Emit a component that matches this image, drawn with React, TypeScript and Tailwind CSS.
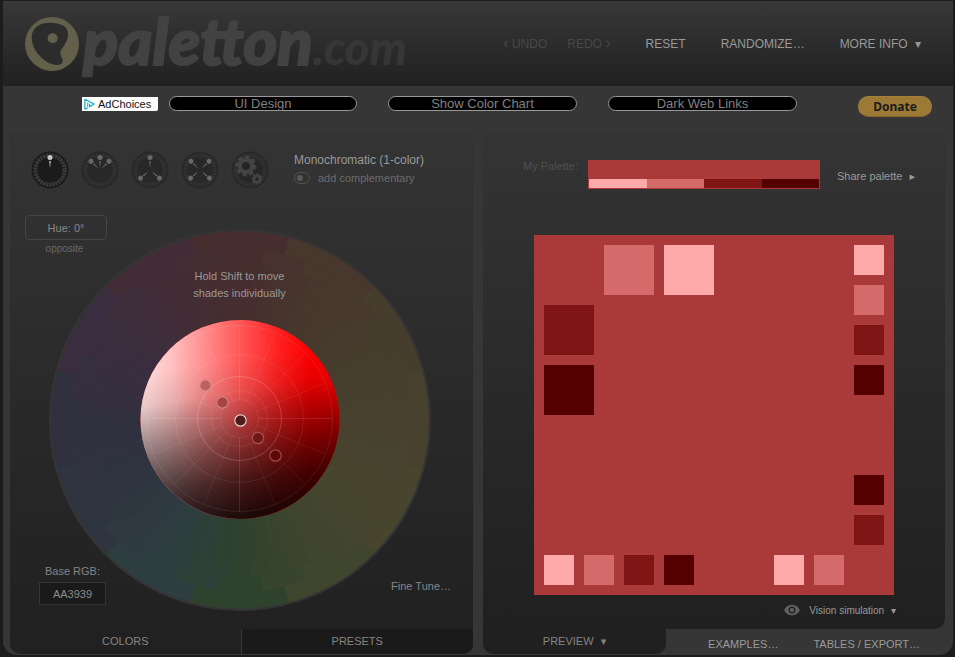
import React from "react";
import { IoMdEye } from "react-icons/io";

const polar = (r: number, deg: number): [number, number] => {
  const a = ((deg - 90) * Math.PI) / 180;
  return [r * Math.cos(a), r * Math.sin(a)];
};

const HUES: [number, number, number][] = [
  [70, 45, 46], [71, 55, 45], [71, 61, 45], [71, 65, 46], [71, 69, 46], [64, 69, 46],
  [46, 66, 45], [46, 61, 64], [46, 52, 64], [49, 48, 63], [58, 45, 63], [66, 45, 55],
];

function hueColor(deg: number) {
  const pos = (((deg % 360) + 360) % 360) / 30;
  const i = Math.floor(pos);
  const f = pos - i;
  const a = HUES[i % 12];
  const b = HUES[(i + 1) % 12];
  return `rgb(${a.map((v, k) => Math.round(v + (b[k] - v) * f)).join(",")})`;
}

function sector(r: number, from: number, to: number) {
  const [x1, y1] = polar(r, from);
  const [x2, y2] = polar(r, to);
  return `M0 0L${x1} ${y1}A${r} ${r} 0 0 1 ${x2} ${y2}Z`;
}

function HueRing({ r, count }: { r: number; count: number }) {
  const step = 360 / count;
  return (
    <>
      {Array.from({ length: count }, (_, i) => (
        <path key={i} d={sector(r, (i - 0.5) * step, (i + 0.5) * step + 0.3)} fill={hueColor(i * step)} />
      ))}
    </>
  );
}

const HANDLES = [
  { x: -34.5, y: -34.5, fill: "#c06060", stroke: "#d98f8f" },
  { x: -17.5, y: -17.5, fill: "#a84444", stroke: "#cf8080" },
  { x: 18, y: 18, fill: "#701818", stroke: "#a85252" },
  { x: 35.5, y: 35.5, fill: "#5a0808", stroke: "#a04848" },
  { x: 0.5, y: 0.5, fill: "#511b1b", stroke: "#e6cccc" },
];

function ColorWheel() {
  return (
    <svg viewBox="-191 -191 382 382" className="h-[382px] w-[382px]" role="img" aria-label="Color wheel">
      <defs>
        <linearGradient id="tint" x1="0" y1="0" x2="1" y2="0">
          <stop offset="0" stopColor="#fff" stopOpacity="0.88" />
          <stop offset="0.15" stopColor="#fff" stopOpacity="0.76" />
          <stop offset="0.35" stopColor="#fff" stopOpacity="0.52" />
          <stop offset="0.5" stopColor="#fff" stopOpacity="0.34" />
          <stop offset="0.7" stopColor="#fff" stopOpacity="0.12" />
          <stop offset="0.85" stopColor="#fff" stopOpacity="0" />
        </linearGradient>
        <linearGradient id="shade" x1="0.42" y1="0" x2="0.58" y2="1">
          <stop offset="0.2" stopColor="#000" stopOpacity="0" />
          <stop offset="0.36" stopColor="#000" stopOpacity="0.09" />
          <stop offset="0.5" stopColor="#000" stopOpacity="0.3" />
          <stop offset="0.62" stopColor="#000" stopOpacity="0.48" />
          <stop offset="0.8" stopColor="#000" stopOpacity="0.72" />
          <stop offset="1" stopColor="#000" stopOpacity="0.9" />
        </linearGradient>
      </defs>
      <circle r="190" fill="#333" />
      <HueRing r={189} count={12} />
      <HueRing r={172} count={24} />
      <HueRing r={158} count={48} />
      <HueRing r={143} count={120} />
      <circle r="190" fill="none" stroke="#353535" strokeWidth="2" />
      <circle cy="-0.5" r="99.5" fill="#f00" />
      <circle cy="-0.5" r="99.5" fill="url(#tint)" />
      <circle cy="-0.5" r="99.5" fill="url(#shade)" />
      <g fill="none" stroke="#fff" transform="translate(-0.5 -1.5)">
        {[19, 28, 42, 64, 93].map((r) => (
          <circle key={r} r={r} strokeOpacity={r === 42 ? 0.19 : 0.08} />
        ))}
        {Array.from({ length: 16 }, (_, i) => {
          const [x1, y1] = polar(19, i * 22.5);
          const [x2, y2] = polar(93, i * 22.5);
          return <line key={i} x1={x1} y1={y1} x2={x2} y2={y2} strokeOpacity={i % 4 === 0 ? 0.11 : 0.06} />;
        })}
      </g>
      {HANDLES.map((h) => (
        <circle key={h.x} cx={h.x} cy={h.y} r="5.7" fill={h.fill} stroke={h.stroke} strokeWidth="1.2" />
      ))}
    </svg>
  );
}

function Gear({ x, y, r, teeth, hole }: { x: number; y: number; r: number; teeth: number; hole: number }) {
  return (
    <g transform={`translate(${x} ${y})`} fill="#444">
      {Array.from({ length: teeth }, (_, i) => (
        <path
          key={i}
          d={`M${-r * 0.26} 0L${-r * 0.2} ${-r}H${r * 0.2}L${r * 0.26} 0Z`}
          transform={`rotate(${(i * 360) / teeth + 8})`}
        />
      ))}
      <circle r={r * 0.76} />
      <circle r={hole} fill="#252525" />
    </g>
  );
}

function SchemeIcon({ angles, active }: { angles: number[]; active?: boolean }) {
  const tone = active ? "#c8c8c8" : "#686868";
  return (
    <svg viewBox="-19 -19 38 38" className="h-[38px] w-[38px]" aria-hidden="true">
      <circle r="18.5" fill={active ? "#1b1b1b" : "#282828"} />
      <circle
        r="14.7"
        fill="none"
        stroke={active ? "#3a3a3a" : "#323232"}
        strokeWidth="4"
        strokeDasharray="2.3 0.779"
      />
      {angles.length === 0 && (
        <>
          <circle r="12.5" fill="#272727" />
          <Gear x={-4} y={-4} r={10.5} teeth={8} hole={4} />
          <Gear x={7} y={9} r={5.5} teeth={8} hole={1.8} />
        </>
      )}
      {angles.map((a) => (
        <g key={a} transform={`rotate(${a})`}>
          <path d="M-0.8 -9L0 -2L0.8 -9Z" fill={tone} />
          <circle cy="-12.5" r="2.5" fill={tone} />
        </g>
      ))}
    </svg>
  );
}

const SCHEMES = [
  { name: "Monochromatic", angles: [0], active: true },
  { name: "Adjacent colors", angles: [-46, 0, 46] },
  { name: "Triad", angles: [-131, 0, 131] },
  { name: "Tetrad", angles: [-46, 46, 131, -131] },
  { name: "Freestyle", angles: [] },
];

const SWATCHES = [
  "col-start-8 row-start-2 col-span-5 row-span-5 bg-[#d46a6a]",
  "col-start-14 row-start-2 col-span-5 row-span-5 bg-[#ffaaaa]",
  "col-start-2 row-start-8 col-span-5 row-span-5 bg-[#801515]",
  "col-start-2 row-start-14 col-span-5 row-span-5 bg-[#550000]",
  "col-start-33 row-start-2 col-span-3 row-span-3 bg-[#ffaaaa]",
  "col-start-33 row-start-6 col-span-3 row-span-3 bg-[#d46a6a]",
  "col-start-33 row-start-10 col-span-3 row-span-3 bg-[#801515]",
  "col-start-33 row-start-14 col-span-3 row-span-3 bg-[#550000]",
  "col-start-33 row-start-25 col-span-3 row-span-3 bg-[#550000]",
  "col-start-33 row-start-29 col-span-3 row-span-3 bg-[#801515]",
  "col-start-2 row-start-33 col-span-3 row-span-3 bg-[#ffaaaa]",
  "col-start-6 row-start-33 col-span-3 row-span-3 bg-[#d46a6a]",
  "col-start-10 row-start-33 col-span-3 row-span-3 bg-[#801515]",
  "col-start-14 row-start-33 col-span-3 row-span-3 bg-[#550000]",
  "col-start-25 row-start-33 col-span-3 row-span-3 bg-[#ffaaaa]",
  "col-start-29 row-start-33 col-span-3 row-span-3 bg-[#d46a6a]",
];

function Glyph({ children }: { children: React.ReactNode }) {
  return <span className="ml-1 font-['DejaVu_Sans',sans-serif]">{children}</span>;
}

function Header() {
  return (
    <header className="flex h-[85px] items-center justify-between bg-linear-to-b from-[#383838] to-[#212121] pr-8 pl-[22px]">
      <a href="#home" className="flex items-center">
        <svg viewBox="75 50 162 162" className="h-[54px] w-[54px]" aria-hidden="true">
          <circle cx="156" cy="131" r="81" fill="#625f4b" />
          <path
            d="M118 74C135 64 172 66 190 76C204 84 206 100 203 112C199 130 185 143 181 155C179 166 190 174 188 184C185 196 168 195 155 191C125 180 96 148 95 112C95 94 104 82 118 74Z"
            fill="#2c2c2c"
          />
          <circle cx="158" cy="114" r="15" fill="#625f4b" />
        </svg>
        <span className="ml-1 font-['Lato',sans-serif] text-[65px] leading-[70px] font-black text-[#424242] italic [-webkit-text-stroke:2px_#424242]">
          paletton
          <span className="text-[47px] font-black text-[#363636] [-webkit-text-stroke:0px]">.com</span>
        </span>
      </a>
      <nav className="flex items-center gap-[35px] text-xs whitespace-nowrap text-[#999]">
        <div className="flex gap-5 text-[#484848]">
          <button disabled>
            <span className="text-base leading-none">‹</span> UNDO
          </button>
          <button disabled>
            REDO <span className="text-base leading-none">›</span>
          </button>
        </div>
        <button>RESET</button>
        <button>RANDOMIZE…</button>
        <button>
          MORE INFO <Glyph>▾</Glyph>
        </button>
      </nav>
    </header>
  );
}

function AdBar() {
  return (
    <div className="flex h-[45px] items-start gap-[31px] pt-[10px] pr-[21px] pl-[79px]">
      <div className="flex flex-1 items-center gap-[11px]">
        <a
          href="#adchoices"
          className="flex h-[14px] w-[76px] items-center gap-[3px] rounded-br-xs bg-white pl-[2px] text-[11px] leading-4 text-[#111]"
        >
          <svg viewBox="0 0 12 12" className="h-3 w-[11px]" fill="none" stroke="#00aecd" aria-hidden="true">
            <path d="M4 10.5L1 11.3V0.8L11 6L6 9V5.5" strokeWidth="1.3" strokeLinejoin="round" />
            <path d="M4 4.5V9.5" strokeWidth="1" />
          </svg>
          <span className="pt-px">AdChoices</span>
        </a>
        <AdLink>UI Design</AdLink>
      </div>
      <div className="flex w-[409px] gap-[31px]">
        <AdLink>Show Color Chart</AdLink>
        <AdLink>Dark Web Links</AdLink>
      </div>
      <button className="ml-[30px] h-[21px] w-[74px] rounded-full border border-[#a5803a] border-b-[#86672c] bg-[#9c7a35] font-['Noto_Sans',sans-serif] text-xs leading-[19px] font-bold text-[#1c1c1c]">
        Donate
      </button>
    </div>
  );
}

function AdLink({ children }: { children: string }) {
  return (
    <a
      href="#ad"
      className="h-[15px] flex-1 rounded-full border border-[#999] bg-black text-center text-[13px] leading-[13px] text-[#808080]"
    >
      {children}
    </a>
  );
}

function ColorsPanel() {
  return (
    <section className="overflow-hidden rounded-b-[10px] bg-linear-to-b from-[#343434] to-[#202020]">
      <div className="flex pt-5 pl-[21px]">
        <div className="flex gap-3">
          {SCHEMES.map((s) => (
            <button key={s.name} aria-label={s.name} aria-pressed={!!s.active}>
              <SchemeIcon angles={s.angles} active={s.active} />
            </button>
          ))}
        </div>
        <div className="ml-[25px] pt-px">
          <p className="text-xs leading-4 text-[#999]">Monochromatic (1-color)</p>
          <label className="mt-[2px] flex items-center text-[11px] leading-4 text-[#6c6c6c]">
            <input
              type="checkbox"
              className="mr-2 flex h-3 w-4 appearance-none items-center rounded-full border border-[#505050] pl-[2px] before:h-[6px] before:w-[6px] before:rounded-full before:bg-[#585858]"
            />
            add complementary
          </label>
        </div>
      </div>
      <div className="mt-[26px] mb-4 grid h-[398px] grid-cols-1 grid-rows-1 text-[11px]">
        <div className="col-start-1 row-start-1 mr-[3px] mb-[2px] self-end justify-self-center">
          <ColorWheel />
        </div>
        <div className="z-10 col-start-1 row-start-1 ml-[15px] flex w-[82px] flex-col self-start">
          <button className="h-[25px] rounded border border-[#454545] pt-px text-[#888]">Hue: 0°</button>
          <button className="mr-[3px] mt-px text-[10px] leading-4 text-[#686868]">opposite</button>
        </div>
        <p className="z-10 col-start-1 row-start-1 mt-[53px] mr-1 self-start justify-self-center text-center leading-[17px] text-[#999]">
          Hold Shift to move
          <br />
          shades individually
        </p>
        <div className="z-10 col-start-1 row-start-1 mb-2 ml-[29px] flex w-[67px] flex-col self-end">
          <label htmlFor="base-rgb" className="text-center leading-4 text-[#858585]">
            Base RGB:
          </label>
          <input
            id="base-rgb"
            defaultValue="AA3939"
            className="mt-[3px] h-[23px] w-full border border-[#363636] bg-[#1a1a1a] text-center text-[#8c8c8c]"
          />
        </div>
        <button className="z-10 col-start-1 row-start-1 mr-[22px] mb-[19px] self-end justify-self-end leading-4 text-[#858585]">
          Fine Tune…
        </button>
      </div>
      <div className="grid grid-cols-2 text-[11px] text-[#858585]">
        <button className="h-[25px] border-r border-[#383838]">COLORS</button>
        <button className="h-[25px] bg-[#1a1a1a]">PRESETS</button>
      </div>
    </section>
  );
}

function PreviewPanel() {
  return (
    <section className="text-[11px] text-[#999]">
      <div className="h-[498px] rounded-br-[10px] bg-linear-to-b from-[#343434] to-[#202020] pt-[29px]">
        <div className="flex items-start pl-10">
          <span className="leading-[13px] text-[#505050]">My Palette:</span>
          <div className="ml-[10px] w-[232px] border border-[#aa3939] bg-[#aa3939] pt-[18px]">
            <div className="grid h-[9px] grid-cols-4">
              <div className="bg-[#ffaaaa]" />
              <div className="bg-[#d46a6a]" />
              <div className="bg-[#801515]" />
              <div className="bg-[#550000]" />
            </div>
          </div>
          <button className="mt-2 ml-[17px] leading-4">
            Share palette <Glyph>▸</Glyph>
          </button>
        </div>
        <div className="mt-[46px] grid grid-cols-[repeat(36,10px)] grid-rows-[repeat(36,10px)] content-start justify-center">
          <div className="col-start-1 row-start-1 col-end-37 row-end-37 bg-[#aa3939]" />
          {SWATCHES.map((c) => (
            <div key={c} className={c} />
          ))}
        </div>
        <button className="mt-[6px] mr-[49px] ml-auto flex items-center text-[10px] leading-4">
          <IoMdEye className="mr-2 mb-[2px] h-[18px] w-[18px] text-[#606060]" />
          <span>
            Vision simulation <Glyph>▾</Glyph>
          </span>
        </button>
      </div>
      <div className="flex h-[25px]">
        <button className="w-[183px] rounded-b-[10px] bg-[#202020] text-[#858585]">
          PREVIEW <Glyph>▾</Glyph>
        </button>
        <div className="flex flex-1 items-center justify-end gap-[35px] pt-[5px] pr-[25px]">
          <button>EXAMPLES…</button>
          <button>TABLES / EXPORT…</button>
        </div>
      </div>
    </section>
  );
}

export default function App() {
  return (
    <div className="min-h-screen bg-[#1c1c1c] pt-px pr-[2px] pb-[2px] pl-[3px] font-['Liberation_Sans',sans-serif]">
      <div className="rounded-b-[14px] bg-[#363636] pb-px">
        <Header />
        <AdBar />
        <main className="grid grid-cols-[463fr_462fr] gap-[10px] pr-2 pl-[7px]">
          <ColorsPanel />
          <PreviewPanel />
        </main>
      </div>
    </div>
  );
}
